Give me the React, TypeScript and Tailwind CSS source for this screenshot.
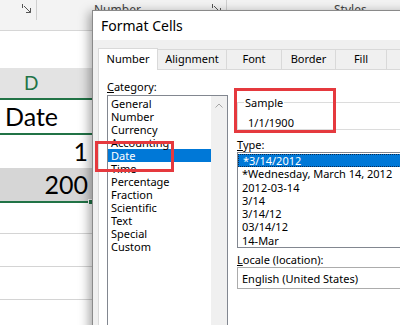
import React from 'react';

const categories = ['General', 'Number', 'Currency', 'Accounting', 'Date', 'Time', 'Percentage', 'Fraction', 'Scientific', 'Text', 'Special', 'Custom'];
const types = ['*3/14/2012', '*Wednesday, March 14, 2012', '2012-03-14', '3/14', '3/14/12', '03/14/12', '14-Mar'];
const tabs = [
  { label: 'Alignment', w: 'w-[69px]' },
  { label: 'Font', w: 'w-[55px]' },
  { label: 'Border', w: 'w-[54px]' },
  { label: 'Fill', w: 'w-[51px]' },
];

const Launcher: React.FC = () => (
  <svg width="10" height="10" viewBox="0 0 10 10" fill="none" stroke="#555" strokeWidth="1">
    <path d="M0.5 0 V4" />
    <path d="M2 2 L8.5 8.5" />
    <path d="M8.5 4 V8.5 H4" />
  </svg>
);

const Sheet: React.FC = () => (
  <div className="w-full font-['Lato',sans-serif] text-black">
    <div className="flex h-[31px] items-start border-b border-[#d6d6d6] bg-[#f3f3f3] font-['Noto_Sans',sans-serif] text-[12px] text-[#444]">
      <div className="flex h-[20px] w-[37px] justify-end border-r border-[#cfcfcf] pr-[4px] pt-[4px]">
        <Launcher />
      </div>
      <div className="flex h-[20px] w-[190px] justify-between border-r border-[#cfcfcf] pl-[57px] pr-[4px] pt-[1px]">
        <span>Number</span>
        <span className="pt-[3px]"><Launcher /></span>
      </div>
      <div className="pl-[107px] pt-[1px]">Styles</div>
    </div>
    <div className="h-[37px] bg-white" />
    <div className="flex h-[32px] items-center border-b-2 border-[#217346] bg-[#e3e3e3] pl-[24px] text-[19px] text-[#217346]">
      D
    </div>
    <div className="flex h-[33px] w-[92px] items-center pl-[5px] text-[25px]">Date</div>
    <div className="border-y-2 border-[#217346]">
      <div className="flex h-[33px] w-[91px] items-center justify-end pr-[3px] text-[25px]">1</div>
      <div className="flex h-[33px] items-center bg-[#d6d6d6]">
        <span className="w-[91px] pr-[3px] text-right text-[25px]">200</span>
      </div>
    </div>
    <div className="h-[31px] border-b border-[#d4d4d4]" />
    <div className="h-[33px] border-b border-[#d4d4d4]" />
    <div className="h-[33px] border-b border-[#d4d4d4]" />
    <div className="h-[33px]" />
  </div>
);

const Dialog: React.FC = () => (
  <div className="absolute left-[92px] top-[10px] flex h-[330px] w-[330px] flex-col border border-[#8a8a8a] bg-[#f0f0f0] font-['Noto_Sans',sans-serif] text-black shadow-[-3px_2px_10px_rgba(0,0,0,0.35)]">
    <div className="flex h-[29px] items-center bg-white pl-[8px] text-[14px]">Format Cells</div>
    <div className="flex flex-1 flex-col pl-[5px] pt-[8px]">
      <div className="flex h-[21px] items-end text-[11px]">
        <div className="relative z-10 -mb-px flex h-[22px] w-[60px] shrink-0 items-center justify-center border border-b-0 border-[#d9d9d9] bg-white">
          Number
        </div>
        {tabs.map((t) => (
          <div key={t.label} className={`flex h-[20px] ${t.w} shrink-0 items-center justify-center border-r border-t border-[#d9d9d9] bg-[#f0f0f0]`}>
            {t.label}
          </div>
        ))}
        <div className="h-[20px] w-[60px] shrink-0 border-t border-[#d9d9d9] bg-[#f0f0f0]" />
      </div>
      <div className="flex flex-1 gap-[9px] border border-[#d9d9d9] bg-white pl-[8px] pt-[10px] text-[11px] leading-[13px]">
        <div className="flex w-[121px] shrink-0 flex-col">
          <div className="h-[13px]">
            <span className="underline">C</span>ategory:
          </div>
          <div className="mt-[2px] flex flex-1 border border-[#828790]">
            <div className="flex-1 pt-px">
              {categories.map((c) => (
                <div key={c} className={`h-[13px] pl-[3px] ${c === 'Date' ? 'bg-[#0078d7] text-white' : ''}`}>
                  {c}
                </div>
              ))}
            </div>
            <div className="flex w-[16px] justify-center bg-[#f0f0f0] pt-[7px]">
              <svg width="8" height="5" viewBox="0 0 8 5" fill="none" stroke="#a6a6a6" strokeWidth="1">
                <path d="M0.5 4.5 L4 1 L7.5 4.5" />
              </svg>
            </div>
          </div>
        </div>
        <div className="flex w-[175px] shrink-0 flex-col pt-[16px]">
          <div className="relative mt-[6px] h-[28px] border border-[#dcdcdc] pl-[10px] pt-[13px]">
            <span className="absolute -top-[7px] left-[6px] bg-white px-px">Sample</span>
            1/1/1900
          </div>
          <div className="mt-[8px] h-[13px]">
            <span className="underline">T</span>ype:
          </div>
          <div className="mt-px h-[96px] border border-[#828790] pt-px">
            {types.map((t, i) => (
              <div
                key={t}
                className={`h-[13.3px] pl-[4px] ${i === 0 ? 'border border-dotted border-[#0a2a52] bg-[#0078d7] pl-[3px] leading-[11px] text-white' : ''}`}
              >
                {t}
              </div>
            ))}
          </div>
          <div className="mt-[5px] h-[13px]">
            <span className="underline">L</span>ocale (location):
          </div>
          <div className="mt-px flex h-[22px] items-center border border-[#acacac] pl-[4px]">English (United States)</div>
        </div>
      </div>
    </div>
  </div>
);

const App: React.FC = () => {
  return (
    <div className="relative h-[325px] w-[400px] overflow-hidden bg-white">
      <Sheet />
      <div className="absolute left-[88px] top-[199px] h-[6px] w-[6px] border border-white bg-[#217346]" />
      <Dialog />
      <div className="absolute left-[234px] top-[88px] h-[45px] w-[102px] border-[3px] border-[#e5393e]" />
      <div className="absolute left-[95px] top-[141px] h-[31px] w-[79px] border-[3px] border-[#e5393e]" />
    </div>
  );
};

export default App;
